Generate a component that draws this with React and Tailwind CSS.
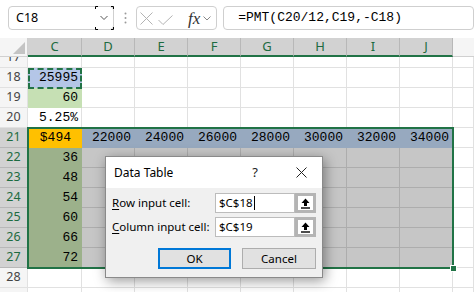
import React from 'react';

const SANS = "font-['Noto_Sans',sans-serif]";
const MONO = "font-['Liberation_Mono',monospace]";

const COLS = [
  { key: 'C', w: 'w-[54px]' },
  { key: 'D', w: 'w-[53px]' },
  { key: 'E', w: 'w-[53px]' },
  { key: 'F', w: 'w-[53px]' },
  { key: 'G', w: 'w-[53px]' },
  { key: 'H', w: 'w-[53px]' },
  { key: 'I', w: 'w-[53px]' },
  { key: 'J', w: 'w-[53px]' },
];

// fill colour + gridline colour for each kind of cell
const KIND = {
  plain: 'bg-white border-[#e1e1e1]',
  sel: 'bg-[#c6c6c6] border-[#adadad]',
  blue: 'bg-[#b4c6e7] border-[#b4c6e7]',
  green: 'bg-[#c6e0b4] border-[#c6e0b4]',
  gold: 'bg-[#ffc000] border-[#ffc000]',
  slate: 'bg-[#97a9bf] border-[#97a9bf]',
  selgreen: 'bg-[#9cb18b] border-[#9cb18b]',
};

const blank = (kind = 'plain') => Array.from({ length: 8 }, () => ({ text: '', kind }));

const buildRows = () => {
  const rows = [];
  rows.push({ n: 17, cells: blank() });
  const r18 = blank(); r18[0] = { text: '25995', kind: 'blue' };
  rows.push({ n: 18, cells: r18 });
  const r19 = blank(); r19[0] = { text: '60', kind: 'green' };
  rows.push({ n: 19, cells: r19 });
  const r20 = blank(); r20[0] = { text: '5.25%', kind: 'plain' };
  rows.push({ n: 20, cells: r20 });
  const r21 = [{ text: '$494', kind: 'gold', cur: true }];
  [22000, 24000, 26000, 28000, 30000, 32000, 34000].forEach((v) => r21.push({ text: String(v), kind: 'slate' }));
  rows.push({ n: 21, cells: r21, sel: true });
  [36, 48, 54, 60, 66, 72].forEach((v, i) => {
    const r = blank('sel');
    r[0] = { text: String(v), kind: 'selgreen' };
    rows.push({ n: 22 + i, cells: r, sel: true });
  });
  rows.push({ n: 28, cells: blank() });
  rows.push({ n: '', cells: blank() }); // row 29, only its top edge shows
  return rows;
};

const Row = ({ row }) => (
  <div className="flex h-[20px]">
    <div
      className={`w-[28px] shrink-0 border-r border-b flex items-center justify-center text-[12.5px] leading-none ${SANS} ${
        row.sel ? 'bg-[#d2d2d2] text-[#1d6b40] border-[#b8b8b8]' : 'bg-[#f5f5f5] text-[#444] border-[#e1e1e1]'
      }`}
    >
      {row.n}
    </div>
    {row.cells.map((c, i) => (
      <div
        key={i}
        className={`${COLS[i].w} shrink-0 border-r border-b ${KIND[c.kind]} flex items-center justify-end pt-[1px] text-[13px] text-black ${MONO} ${
          c.cur ? 'pr-[10px]' : 'pr-[3px]'
        }`}
      >
        {c.text}
      </div>
    ))}
    <div className="w-[21px] shrink-0 border-b border-r bg-white border-[#e1e1e1]" />
  </div>
);

const UpArrow = () => (
  <svg width="9" height="11" viewBox="0 0 9 11">
    <path d="M4.5 0.5 L8.5 5 L6 5 L6 8 L3 8 L3 5 L0.5 5 Z" fill="#000" />
    <rect x="0" y="9.3" width="9" height="1.4" fill="#000" />
  </svg>
);

const InputRow = ({ label, rest, value, caret }) => (
  <div className="flex items-center h-[20px]">
    <div className="flex-1 text-[11.5px] text-black">
      <span className="underline underline-offset-2">{label}</span>
      {rest}
    </div>
    <div className="w-[80px] h-full bg-white border border-[#bcbcbc] flex items-center pl-[3px] text-[11.5px] text-black">
      {value}
      {caret && <span className="inline-block w-[1.5px] h-[14px] bg-black ml-[1px]" />}
    </div>
    <div className="w-[21px] h-full bg-white border-[3px] border-[#b4b4b4] flex items-center justify-center">
      <UpArrow />
    </div>
  </div>
);

const DataTableDialog = () => (
  <div className={`absolute left-[105px] top-[156px] w-[218px] h-[122px] border border-[#8a8a8a] bg-[#f0f0f0] shadow-[2px_3px_12px_rgba(0,0,0,0.4)] ${SANS}`}>
    <div className="h-[31px] bg-white flex items-center pl-[8px]">
      <span className="text-[12px] text-black">Data Table</span>
      <div className="ml-auto flex h-full">
        <div className="w-[50px] flex items-center justify-center text-[13px] text-[#222]">?</div>
        <div className="w-[42px] flex items-center justify-center">
          <svg width="11" height="11" viewBox="0 0 11 11">
            <path d="M0.5 0.5 L10.5 10.5 M10.5 0.5 L0.5 10.5" stroke="#222" strokeWidth="1" />
          </svg>
        </div>
      </div>
    </div>
    <div className="px-[6px] pt-[5px]">
      <InputRow label="R" rest="ow input cell:" value="$C$18" caret />
      <div className="mt-[4px]">
        <InputRow label="C" rest="olumn input cell:" value="$C$19" />
      </div>
      <div className="mt-[11px] flex justify-end gap-[11px]">
        <button className="w-[73px] h-[21px] bg-[#e1e1e1] border-2 border-[#0078d7] text-[11.5px] text-black">OK</button>
        <button className="w-[74px] h-[21px] bg-[#e1e1e1] border border-[#adadad] text-[11.5px] text-black">Cancel</button>
      </div>
    </div>
  </div>
);

const FormulaBar = () => (
  <div className="h-[38px] flex items-start pt-[6px] bg-white">
    <div className="ml-[8px] w-[110px] h-[24px] border border-[#cfcfcf] rounded-[4px] flex items-center">
      <span className={`flex-1 pl-[7px] text-[12.5px] text-black ${SANS}`}>C18</span>
      <svg width="19" height="24" viewBox="0 0 19 24" className="-my-px -mr-px">
        <path d="M0.5 3 V0.5 H3 M16 0.5 H18.5 V3 M0.5 21 V23.5 H3 M16 23.5 H18.5 V21" stroke="#000" strokeWidth="1" fill="none" />
        <path d="M5.5 10 L9 13.5 L12.5 10" stroke="#555" strokeWidth="1" fill="none" />
      </svg>
    </div>
    <div className="w-[23px] h-[24px] flex items-center justify-center">
      <svg width="3" height="12" viewBox="0 0 3 12">
        <circle cx="1.5" cy="1.5" r="1" fill="#9a9a9a" />
        <circle cx="1.5" cy="6" r="1" fill="#9a9a9a" />
        <circle cx="1.5" cy="10.5" r="1" fill="#9a9a9a" />
      </svg>
    </div>
    <div className="w-[84px] h-[24px] border border-[#cfcfcf] rounded-[4px] flex items-center pl-[3px]">
      <svg width="13" height="13" viewBox="0 0 13 13">
        <path d="M0.5 0.5 L12.5 12.5 M12.5 0.5 L0.5 12.5" stroke="#b3b3b3" strokeWidth="1" />
      </svg>
      <svg width="15" height="10" viewBox="0 0 15 10" className="ml-[5px] mt-[4px]">
        <path d="M0.5 5 L5 9.5 L14.5 0.5" stroke="#b3b3b3" strokeWidth="1" fill="none" />
      </svg>
      <span className="ml-[15px] text-[17px] leading-none italic font-['Liberation_Serif',serif] text-[#333]">fx</span>
      <svg width="8" height="5" viewBox="0 0 8 5" className="ml-[3px] mt-[1px]">
        <path d="M0.5 0.5 L4 4 L7.5 0.5" stroke="#888" strokeWidth="1" fill="none" />
      </svg>
    </div>
    <div className="ml-[6px] w-[260px] h-[24px] border border-[#cfcfcf] rounded-[4px] flex items-center pl-[14px]">
      <span className={`text-[13px] text-black ${MONO}`}>=PMT(C20/12,C19,-C18)</span>
    </div>
  </div>
);

const ColumnHeaders = () => (
  <div className="flex h-[19px]">
    <div className="w-[28px] shrink-0 bg-[#f5f5f5] border-r border-b border-[#d0d0d0] relative">
      <svg width="12" height="12" viewBox="0 0 12 12" className="absolute right-[2px] bottom-[2px]">
        <path d="M12 0 L12 12 L0 12 Z" fill="#c4c4c4" />
      </svg>
    </div>
    {COLS.map((c) => (
      <div
        key={c.key}
        className={`${c.w} shrink-0 bg-[#d2d2d2] border-r border-[#b8b8b8] border-b-2 border-b-[#217346] flex items-center justify-center text-[13px] text-[#1d6b40] ${SANS}`}
      >
        {c.key}
      </div>
    ))}
    <div className="w-[21px] shrink-0 bg-[#f5f5f5] border-b border-[#d0d0d0]" />
  </div>
);

export default function App() {
  const rows = buildRows();
  return (
    <div className="relative w-[474px] h-[292px] overflow-hidden bg-white">
      <FormulaBar />
      <ColumnHeaders />
      <div className="h-[11px] overflow-hidden">
        <div className="-mt-[9px]">
          <Row row={rows[0]} />
        </div>
      </div>
      {rows.slice(1, -1).map((r) => (
        <Row key={r.n} row={r} />
      ))}
      <div className="h-[4px] overflow-hidden">
        <Row row={rows[rows.length - 1]} />
      </div>

      {/* copy marquee on C18 */}
      <div className="absolute left-[28px] top-[68px] w-[54px] h-[21px] border-2 border-dashed border-[#217346]" />
      {/* selection C21:J27 */}
      <div className="absolute left-[27px] top-[127px] w-[427px] h-[142px] border-2 border-[#217346]" />
      <div className="absolute left-[450px] top-[265px] w-[7px] h-[7px] bg-[#217346] border border-white" />

      <DataTableDialog />
    </div>
  );
}
